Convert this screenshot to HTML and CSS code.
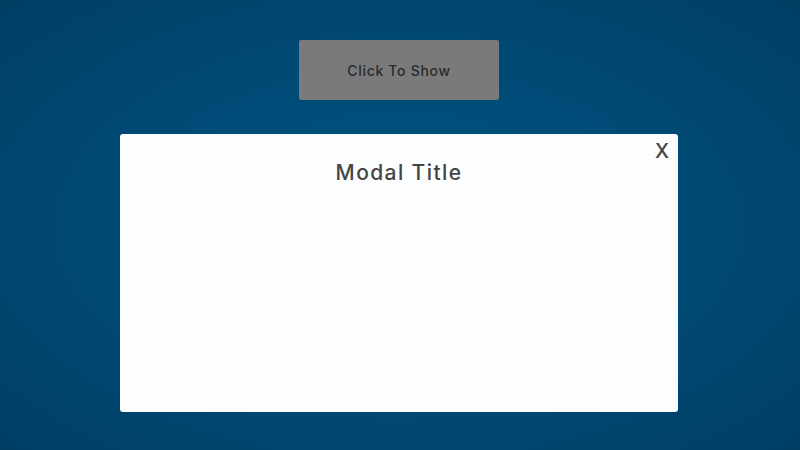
FILE: index.html
```html
<!DOCTYPE html>
<html>
<head>
<meta charset="utf-8">
<link rel="stylesheet" href="styles.css">
</head>
<body>
<div class="page">
  <button class="show-btn">Click To Show</button>
  <div class="modal">
    <span class="close">X</span>
    <h2 class="modal-title">Modal Title</h2>
  </div>
</div>
</body>
</html>
```
FILE: styles.css
```css
html, body {
  margin: 0;
  padding: 0;
  width: 800px;
  height: 450px;
  overflow: hidden;
}
body {
  background: radial-gradient(ellipse at 50% 50%, #005381 0%, #004c78 45%, #003e64 100%);
  font-family: "Inter", "Open Sans", sans-serif;
}
.page {
  width: 798px;
  display: flex;
  flex-direction: column;
  align-items: center;
  padding-top: 40px;
}
.show-btn {
  width: 200px;
  height: 60px;
  background: #7a7a7a;
  border: none;
  border-radius: 2px;
  color: #2a2a2a;
  font-family: "Inter", "Open Sans", sans-serif;
  font-size: 14px;
  font-weight: 500;
  letter-spacing: 0.7px;
  padding: 0;
  margin: 0;
}
.modal {
  position: relative;
  margin-top: 34px;
  width: 558px;
  height: 278px;
  background: #fbfdff;
  border-radius: 3px;
  box-sizing: border-box;
  padding-top: 25px;
}
.modal-title {
  margin: 0;
  text-align: center;
  font-size: 21px;
  font-weight: 500;
  color: #444;
  letter-spacing: 1.4px;
  line-height: 28px;
}
.close {
  position: absolute;
  top: 4px;
  right: 9px;
  font-size: 20px;
  font-weight: 500;
  color: #444;
  line-height: 26px;
}
```
